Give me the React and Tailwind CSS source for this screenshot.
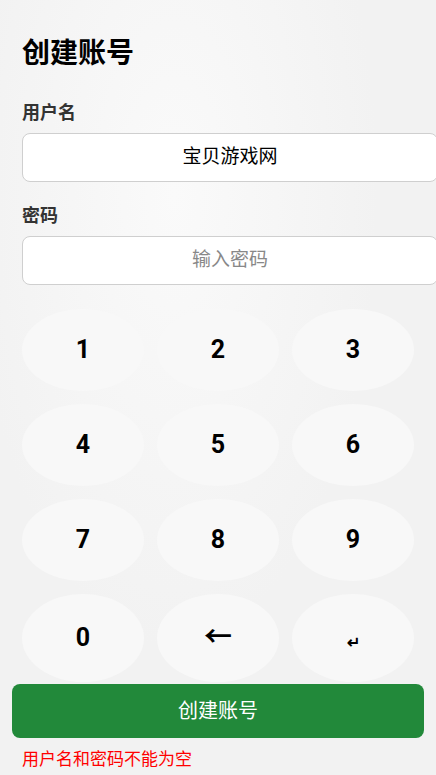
const KEYS = ['1', '2', '3', '4', '5', '6', '7', '8', '9', '0', '←', '↵'];

export default function App() {
  return (
    <div
      className="w-[436px] h-[775px] overflow-hidden bg-[#f2f2f2] bg-[radial-gradient(ellipse_at_40%_25%,#fafafa_0%,#f2f2f2_55%)]"
      style={{ fontFamily: 'Roboto, "Noto Sans CJK SC", sans-serif' }}
    >
      <div className="pl-[22px] pt-[36px]">
        <h1 className="text-[28px] leading-[36px] font-bold text-black">创建账号</h1>

        <div className="mt-[29px] text-[18px] leading-[24px] font-bold text-[#333]">用户名</div>
        <div className="mt-[8px] w-[416px] h-[49px] bg-white border border-[#cfcfcf] rounded-[8px] flex items-center justify-center text-[19px] text-black">
          宝贝游戏网
        </div>

        <div className="mt-[22px] text-[18px] leading-[24px] font-bold text-[#333]">密码</div>
        <div className="mt-[8px] w-[416px] h-[49px] bg-white border border-[#cfcfcf] rounded-[8px] flex items-center justify-center text-[19px] text-[#888]">
          输入密码
        </div>

        <div className="mt-[24px] grid grid-cols-[122px_122px_122px] gap-x-[13px] gap-y-[13px]">
          {KEYS.map((k, i) => (
            <div
              key={k}
              className={
                (i >= 9 ? 'h-[88px] ' : 'h-[82px] ') +
                'rounded-[50%] bg-[#f8f8f8] flex items-center justify-center text-[25px] font-bold text-black'
              }
            >
              {k === '↵' ? (
                <span className="text-[16px] mt-[10px]">↵</span>
              ) : k === '←' ? (
                <span className="text-[28px] font-bold">←</span>
              ) : (
                k
              )}
            </div>
          ))}
        </div>
      </div>

      <div className="mx-[12px] mt-[2px] h-[54px] rounded-[8px] bg-[#22893a] flex items-center justify-center text-[20px] text-white">
        创建账号
      </div>
      <div className="pl-[22px] mt-[9px] text-[17px] leading-[24px] text-[#ff0000]">用户名和密码不能为空</div>
    </div>
  );
}
